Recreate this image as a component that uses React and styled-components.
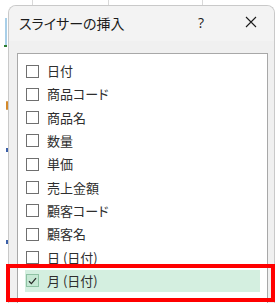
import React from "react";
import styled, { createGlobalStyle } from "styled-components";

const Global = createGlobalStyle`
  html, body { margin: 0; padding: 0; }
  body {
    width: 280px;
    height: 303px;
    overflow: hidden;
    background: #ffffff;
    font-family: "Noto Sans CJK JP", "Noto Sans", sans-serif;
  }
`;

const Page = styled.div`
  position: relative;
  width: 280px;
  height: 303px;
  overflow: hidden;
  background: #ffffff;
`;

const Sheet = styled.div`
  position: absolute;
  inset: 0;
  background:
    linear-gradient(#d9d9d9, #d9d9d9) 32px 0 / 1px 6px no-repeat,
    linear-gradient(#d9d9d9, #d9d9d9) 108px 0 / 1px 6px no-repeat,
    linear-gradient(#d9d9d9, #d9d9d9) 202px 0 / 1px 6px no-repeat,
    #ffffff;
`;

const SheetMark = styled.div`
  position: absolute;
  left: ${(p) => p.$x}px;
  top: ${(p) => p.$y}px;
  width: ${(p) => p.$w}px;
  height: ${(p) => p.$h}px;
  background: ${(p) => p.$c};
  border-radius: ${(p) => p.$r || 0}px;
`;

const Dialog = styled.div`
  position: absolute;
  left: 8px;
  top: 5px;
  width: 265px;
  height: 320px;
  border: 1px solid #c9c9c9;
  border-bottom: none;
  border-radius: 8px 8px 0 0;
  background: #f0f0f0;
  display: flex;
  flex-direction: column;
  overflow: hidden;
`;

const TitleBar = styled.div`
  height: 35px;
  flex: none;
  display: flex;
  align-items: center;
  padding-left: 10px;
  background: #f3f3f3;
  color: #1b1b1b;
`;

const Title = styled.div`
  flex: 1;
  font-size: 14px;
  font-feature-settings: "palt";
  margin-top: -2px;
`;

const HelpButton = styled.div`
  width: 20px;
  font-family: "Segoe UI", "Open Sans", "Noto Sans", sans-serif;
  font-size: 14px;
  text-align: center;
  margin-right: 30px;
  margin-top: -3px;
`;

const CloseButton = styled.div`
  width: 20px;
  height: 20px;
  display: flex;
  align-items: center;
  justify-content: center;
  margin-right: 13px;
  margin-top: -3px;
`;

const Body = styled.div`
  flex: 1;
  padding: 12px 6px 0 8px;
`;

const ListBox = styled.div`
  background: #ffffff;
  border: 1px solid #a8a8a8;
  height: 300px;
  padding: 6px 7px 0 7px;
  display: flex;
  flex-direction: column;
  gap: 1.33px;
`;

const Row = styled.div`
  height: 22px;
  display: flex;
  align-items: center;
  gap: 8px;
  padding-left: 1px;
  background: ${(p) => (p.$selected ? "#d4efe0" : "transparent")};
  color: #2e2e2e;
  font-size: 13px;
  font-feature-settings: "palt";
`;

const Box = styled.div`
  width: 11px;
  height: 11px;
  flex: none;
  border: 1px solid ${(p) => (p.$checked ? "#8fc2a4" : "#6f6f6f")};
  background: ${(p) => (p.$checked ? "#c6e8d4" : "#ffffff")};
  display: flex;
  align-items: center;
  justify-content: center;
`;

const Label = styled.span`
  line-height: 1;
  margin-top: -1px;
`;

const Highlight = styled.div`
  position: absolute;
  left: 6px;
  top: 264px;
  width: 261px;
  height: 30px;
  border: 4px solid #ff0000;
  pointer-events: none;
`;

const items = [
  "日付",
  "商品コード",
  "商品名",
  "数量",
  "単価",
  "売上金額",
  "顧客コード",
  "顧客名",
  "日 (日付)",
  "月 (日付)",
];

export default function App() {
  return (
    <Page>
      <Global />
      <Sheet>
        <SheetMark $x={5} $y={18} $w={2} $h={27} $c="#a9cfe8" />
        <SheetMark $x={4} $y={45} $w={3} $h={2} $c="#2e7d32" />
        <SheetMark $x={6} $y={101} $w={2} $h={9} $c="#d4892a" $r={2} />
        <SheetMark $x={6} $y={148} $w={2} $h={4} $c="#3b5fa8" />
        <SheetMark $x={6} $y={240} $w={2} $h={4} $c="#3b5fa8" />
      </Sheet>
      <Dialog>
        <TitleBar>
          <Title>スライサーの挿入</Title>
          <HelpButton>?</HelpButton>
          <CloseButton>
            <svg width="12" height="12" viewBox="0 0 12 12">
              <path d="M1 1 L11 11 M11 1 L1 11" stroke="#1b1b1b" strokeWidth="1.1" fill="none" />
            </svg>
          </CloseButton>
        </TitleBar>
        <Body>
          <ListBox>
            {items.map((t, i) => {
              const checked = i === 9;
              return (
                <Row key={t} $selected={checked}>
                  <Box $checked={checked}>
                    {checked && (
                      <svg width="9" height="8" viewBox="0 0 9 8">
                        <path d="M1 4.2 L3.4 6.6 L8 1.2" stroke="#2b2b2b" strokeWidth="1.3" fill="none" />
                      </svg>
                    )}
                  </Box>
                  <Label>{t}</Label>
                </Row>
              );
            })}
          </ListBox>
        </Body>
      </Dialog>
      <Highlight />
    </Page>
  );
}
